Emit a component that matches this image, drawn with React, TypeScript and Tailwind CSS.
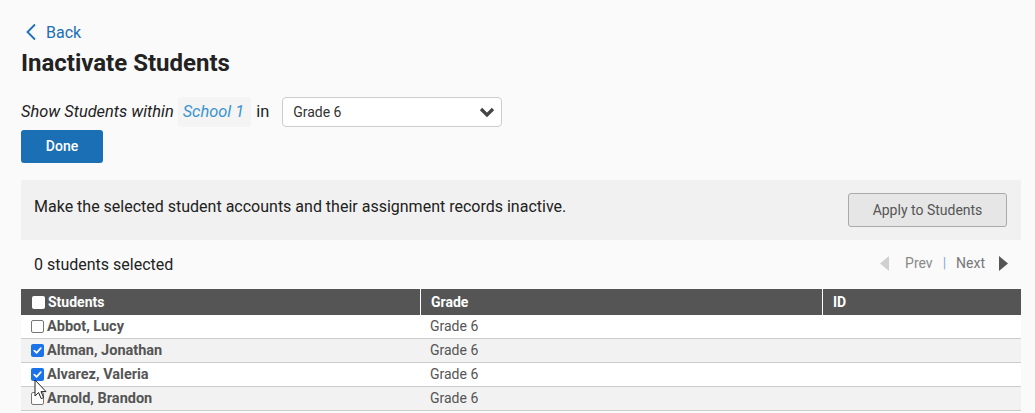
import React from "react";

const rows = [
  { name: "Abbot, Lucy", checked: false },
  { name: "Altman, Jonathan", checked: true },
  { name: "Alvarez, Valeria", checked: true },
  { name: "Arnold, Brandon", checked: false },
];

function Box({ checked, white }: { checked: boolean; white?: boolean }) {
  if (checked) {
    return (
      <span className="inline-flex h-[13px] w-[13px] shrink-0 items-center justify-center rounded-[2px] bg-[#1a73e8]">
        <svg width="11" height="11" viewBox="0 0 12 12">
          <path d="M2.5 6.2 L5 8.6 L9.6 3.4" fill="none" stroke="#fff" strokeWidth="1.8" strokeLinecap="round" strokeLinejoin="round" />
        </svg>
      </span>
    );
  }
  return (
    <span
      className={
        white
          ? "inline-block h-[13px] w-[13px] shrink-0 rounded-[2px] bg-white"
          : "inline-block h-[13px] w-[13px] shrink-0 rounded-[2px] border border-[#767676] bg-white"
      }
    />
  );
}

export default function App() {
  return (
    <div className="min-h-[413px] w-[1035px] bg-[#fafafa] font-['Roboto',sans-serif] text-[#222]">
      <div className="w-[1000px] pl-[21px] pt-[20px]" style={{ boxSizing: "content-box" }}>
        <div className="flex h-[24px] items-center gap-[8px] text-[16px] text-[#1a6fb5]">
          <svg width="14" height="18" viewBox="0 0 14 18" className="ml-[3px]">
            <path d="M11 1.5 L3.5 9 L11 16.5" fill="none" stroke="#1a6fb5" strokeWidth="1.8" />
          </svg>
          <span className="mt-[1px]">Back</span>
        </div>
        <h1 className="mt-[4px] text-[24px] font-bold leading-[30px] text-[#222]">Inactivate Students</h1>
        <div className="mt-[19px] flex h-[30px] items-center">
          <span className="text-[16.4px] italic">Show Students within</span>
          <span className="ml-[4px] rounded-[3px] bg-[#f4f4f4] py-[3px] pl-[5px] pr-[7px] text-[16.4px] italic text-[#3a94cf]">School 1</span>
          <span className="ml-[5px] text-[16.4px]">in</span>
          <div className="ml-[13px] flex h-[30px] w-[220px] items-center justify-between rounded-[4px] border border-[#cccccc] bg-white pl-[10px] pr-[6px] text-[14px] text-[#333]">
            <span>Grade 6</span>
            <svg width="16" height="12" viewBox="0 0 16 12">
              <path d="M2 3 L8 9 L14 3" fill="none" stroke="#444" strokeWidth="3.2" strokeLinejoin="miter" />
            </svg>
          </div>
        </div>
        <button className="mt-[3px] flex h-[33px] w-[82px] items-center justify-center rounded-[3px] bg-[#1a6fb5] text-[14px] font-medium text-white">
          Done
        </button>
        <div className="mt-[17px] flex h-[60px] items-center justify-between bg-[#f1f1f1] pl-[13px] pr-[14px]">
          <span className="-mt-[6px] text-[16px] text-[#222]">Make the selected student accounts and their assignment records inactive.</span>
          <button className="h-[34px] w-[159px] rounded-[3px] border border-[#aaaaaa] bg-[#e6e6e6] text-[14px] text-[#555]">
            Apply to Students
          </button>
        </div>
        <div className="flex h-[49px] items-center justify-between pl-[13px] pr-[13px]">
          <span className="text-[16px] text-[#222]">0 students selected</span>
          <div className="-mt-[2px] flex items-center text-[14px]">
            <svg width="9" height="15" viewBox="0 0 9 15">
              <path d="M9 0 L0 7.5 L9 15 Z" fill="#d0d0d0" />
            </svg>
            <span className="ml-[16px] text-[#888]">Prev</span>
            <span className="ml-[10px] text-[#8aaed0]">|</span>
            <span className="ml-[10px] text-[#777]">Next</span>
            <svg width="9" height="15" viewBox="0 0 9 15" className="ml-[14px]">
              <path d="M0 0 L9 7.5 L0 15 Z" fill="#555" />
            </svg>
          </div>
        </div>
        <div className="grid grid-cols-[399px_1px_401px_1px_198px] bg-[#555] text-[14px] font-bold text-white">
          <div className="flex h-[26px] items-center gap-[3px] pl-[11px]">
            <Box checked={false} white />
            <span>Students</span>
          </div>
          <div className="bg-white" />
          <div className="flex items-center pl-[10px]">Grade</div>
          <div className="bg-white" />
          <div className="flex items-center pl-[10px]">ID</div>
        </div>
        {rows.map((r, i) => (
          <div
            key={r.name}
            className={
              "relative grid h-[24px] grid-cols-[400px_402px_198px] border-b border-[#cccccc] text-[14px] text-[#555] " +
              (i % 2 === 0 ? "bg-white" : "bg-[#f2f2f2]")
            }
          >
            <div className="flex items-center gap-[3px] pl-[10px] text-[14.5px] font-bold">
              <Box checked={r.checked} />
              <span>{r.name}</span>
            </div>
            <div className="flex items-center pl-[9px]">Grade 6</div>
            <div />
            {i === 2 && (
              <svg width="14" height="22" viewBox="0 0 14 22" className="absolute left-[13px] top-[16px] z-10">
                <path d="M1 1 L1 17 L4.6 13.6 L7.2 19.6 L9.6 18.6 L7 12.6 L12 12.6 Z" fill="#fff" stroke="#222" strokeWidth="1" strokeLinejoin="round" />
              </svg>
            )}
          </div>
        ))}
      </div>
    </div>
  );
}
